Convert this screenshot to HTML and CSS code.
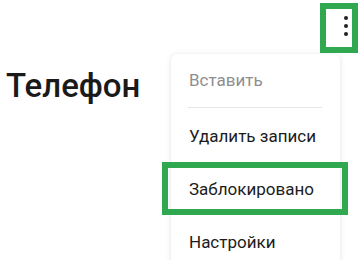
FILE: index.html
```html
<!DOCTYPE html>
<html lang="ru">
<head>
<meta charset="utf-8">
<link rel="stylesheet" href="styles.css">
</head>
<body>
<div class="screen">
  <div class="topbar">
    <div class="more">
      <span class="dot"></span><span class="dot"></span><span class="dot"></span>
    </div>
  </div>
  <h1 class="title">Телефон</h1>

  <div class="menu">
    <div class="item disabled">Вставить</div>
    <div class="divider"></div>
    <div class="item after-divider">Удалить записи</div>
    <div class="item">Заблокировано</div>
    <div class="item">Настройки</div>
  </div>

  <div class="mark mark-more"></div>
  <div class="mark mark-item"></div>
</div>
</body>
</html>
```

FILE: styles.css
```css
html, body {
  margin: 0;
  padding: 0;
  background: #ffffff;
}

.screen {
  position: relative;
  width: 360px;
  height: 260px;
  overflow: hidden;
  font-family: Roboto, "Noto Sans", sans-serif;
  color: #1c1c1c;
}

.topbar {
  height: 56px;
  display: flex;
  justify-content: flex-end;
  align-items: flex-start;
}

.more {
  width: 4px;
  margin: 16px 12px 0 0;
  display: flex;
  flex-direction: column;
  gap: 4px;
}

.dot {
  width: 4px;
  height: 4px;
  border-radius: 50%;
  background: #222;
}

.title {
  margin: 11px 0 0 6px;
  font-size: 33px;
  line-height: 38px;
  font-weight: 500;
  color: #1a1a1a;
  letter-spacing: 0;
}

.menu {
  position: absolute;
  left: 171px;
  top: 54px;
  width: 169px;
  height: 230px;
  background: #fff;
  border-radius: 6px;
  box-shadow: 0 1px 6px rgba(0, 0, 0, 0.10), 0 0 1px rgba(0, 0, 0, 0.08);
}

.item {
  padding: 16px 18px 17px;
  font-size: 17px;
  line-height: 20px;
  color: #1c1c1c;
  white-space: nowrap;
}

.item.disabled {
  color: #8e8e8e;
}

.item.after-divider {
  padding-top: 18px;
}

.divider {
  height: 1px;
  margin: 0 18px 0 17px;
  background: #e6e6e6;
}

.mark {
  position: absolute;
  border: 6px solid #2fa84f;
  box-sizing: border-box;
}

.mark-more {
  left: 320px;
  top: 3px;
  width: 38px;
  height: 50px;
}

.mark-item {
  left: 162px;
  top: 162px;
  width: 186px;
  height: 53px;
}
```
